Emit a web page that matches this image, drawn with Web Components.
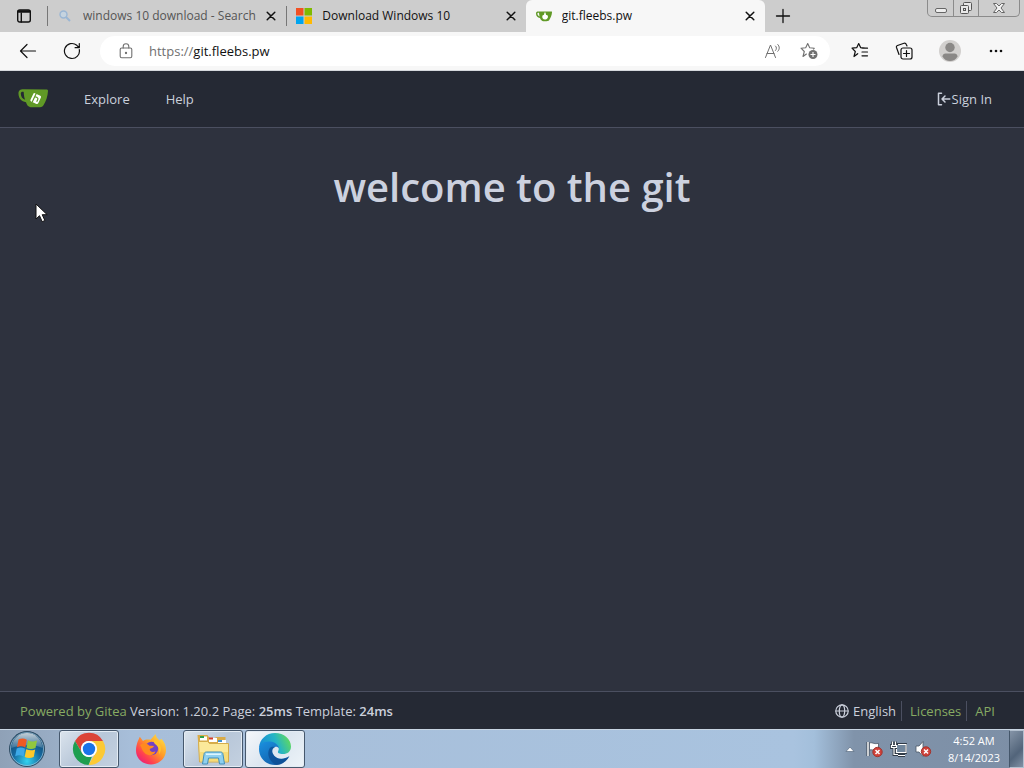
<!DOCTYPE html>
<html lang="en">
<head>
<meta charset="utf-8">
<meta name="viewport" content="width=device-width, initial-scale=1">
<title>git.fleebs.pw</title>
<style>
  html, body { margin: 0; height: 100%; }
  body { font-family: "Open Sans", "Noto Sans", sans-serif; }
</style>
</head>
<body>
<desktop-screen>
  <tab-strip slot="browser">
    <browser-tab icon="search" muted>windows 10 download - Search</browser-tab>
    <browser-tab icon="windows">Download Windows 10</browser-tab>
    <browser-tab icon="mug" active>git.fleebs.pw</browser-tab>
  </tab-strip>
  <browser-toolbar slot="browser"></browser-toolbar>
  <site-nav slot="browser"></site-nav>
  <site-home>welcome to the git</site-home>
  <site-footer slot="bottom"></site-footer>
  <task-bar slot="bottom"></task-bar>
</desktop-screen>

<script>
const line = (size, body, width = 1.2) =>
  `<svg width="${size}" height="${size}" viewBox="0 0 ${size} ${size}" fill="none" stroke="currentColor" stroke-width="${width}" stroke-linecap="round" stroke-linejoin="round" aria-hidden="true">${body}</svg>`;

const star = 'M6.700 11.700 3 14.500 4.300 9.500 1 6.200 5.700 5.700 7.700 1.500 9.700 5.700 14.300 6.200';

const icons = {
  tabs: line(16, '<rect x="1.700" y="2" width="12.600" height="12" rx="2"/><path d="M2.500 3.500h11" stroke-width="2.400"/><path d="M5.300 5v9"/>', 1.4),
  search: `<svg width="16" height="16" viewBox="0 0 16 16" fill="none" stroke="#9ab6d4" aria-hidden="true"><circle cx="6.500" cy="6.500" r="3.500" fill="#c5d3df" stroke-width="1.400"/><path d="m9 9 4 4" stroke-width="1.900"/></svg>`,
  windows: `<svg width="16" height="16" viewBox="0 0 16 16" aria-hidden="true"><path fill="#f25022" d="M0 0h7.500v7.500H0z"/><path fill="#7fba00" d="M8.500 0H16v7.500H8.500z"/><path fill="#00a4ef" d="M0 8.500h7.500V16H0z"/><path fill="#ffb900" d="M8.500 8.500H16V16H8.500z"/></svg>`,
  mug: `<svg width="16" height="16" viewBox="0 0 16 16" aria-hidden="true"><path fill="#609926" d="M0 5.500c0-2 1.500-2.300 3-2h12.500c.5 0 .6.500.5 1-.3 3-1.500 5.500-3 8-.5.800-6 1-7 .2C4.800 12 4.400 11 4 10 1.500 9.500 0 8 0 5.500Zm1.400-.2c0 1.700 1 2.800 2.200 3.200-.3-1.200-.5-2.400-.6-3.700-.8-.2-1.500-.2-1.600.5Z"/><path fill="#fff" d="m6.500 7.500 1.500-.8.500-2.200h1l.5 2.200 1.700.8c.8 2-.5 4-2.700 4s-3.300-2-2.500-4Z"/></svg>`,
  gitea: `<svg width="32" height="22" viewBox="0 0 32 22" aria-hidden="true"><path fill="#609926" d="M1.500 6C1.200 2 4 .8 8 1.300L29.500 1.500c1 0 1.500.5 1.500 1.500-.2 5-2 10.500-4.700 14.500-.8 1.200-1.800 1.700-3.300 1.700h-9.500c-2.500-.3-4-3-4.500-5C4.500 13.500 1.700 10.500 1.500 6Zm2.300-.4c0 3 1.500 5.400 4.300 6.200C7.200 9.500 6.800 6.500 6.700 3.900c-1.900-.2-2.900.2-2.900 1.700Z"/><g transform="rotate(25 18.500 10.500)"><rect x="14.500" y="6" width="8.500" height="9" rx="1.300" fill="#fff"/><path d="M17 5v10M17 9h2.500q1.500 0 1.500 1.500V13" fill="none" stroke="#609926" stroke-width="1.200"/></g></svg>`,
  close: line(10, '<path d="m1.200 1.200 7.600 7.600M8.800 1.200 1.200 8.800"/>', 1.5),
  plus: line(16, '<path d="M8 1.500v13M1.500 8h13"/>', 1.3),
  back: line(18, '<path d="M16.500 9h-15M8 2.500 1.500 9 8 15.500"/>', 1.2),
  reload: line(18, '<path d="M16.300 7.600A7.500 7.500 0 1 1 13.800 3.300L16 5.500M16.300 1.500v4.200h-4.200"/>', 1.2),
  lock: line(16, '<rect x="2.200" y="5" width="11.600" height="9.700" rx="1.500"/><path d="M5.200 5V3.500a2.800 2.800 0 0 1 5.600 0V5"/><circle cx="8" cy="10" r=".6" fill="currentColor"/>', 1.1),
  readAloud: line(18, '<path d="m1.500 15.500 5-12.500 5 12.500M3 11.500h7M11.500 4c1.300 1 1.300 3.300 0 4.500M13.800 2.500c2 2 2 4.800 0 6.800"/>', 1),
  starAdd: `<svg width="18" height="18" viewBox="0 0 18 18" fill="none" stroke="currentColor" stroke-width="1.100" stroke-linejoin="round" aria-hidden="true"><path d="${star} 13.300 7.500"/><circle cx="13" cy="12.500" r="4.500" fill="currentColor" stroke="none"/><path d="M13 10v5M10.500 12.500h5" stroke="#fff"/></svg>`,
  favorites: line(18, `<path d="${star}M11 6.200h5.500M11 10h5.500M11 13.800h5.500"/>`, 1.2),
  collections: line(18, '<rect x="6" y="6" width="11" height="11" rx="2"/><path d="M11.500 8.500v6M8.500 11.500h6M4 12.500 1.500 5.500c-.3-1 .2-1.700 1-2l6.500-2.300c1-.3 1.800 0 2.200 1L12 4"/>', 1.2),
  profile: `<svg width="22" height="22" viewBox="0 0 22 22" aria-hidden="true"><circle cx="11" cy="11" r="11" fill="#d2d0ce"/><circle cx="11" cy="7.500" r="4.700" fill="#8a8886"/><path fill="#8a8886" d="M3.500 16.500c0-2 1.500-3 3-3h9c1.500 0 3 1 3 3-1.500 3-4.500 4.500-7.500 4.500s-6-1.500-7.500-4.500Z"/></svg>`,
  more: '<svg width="16" height="16" viewBox="0 0 16 16" aria-hidden="true"><g fill="currentColor"><circle cx="3" cy="8" r="1.300"/><circle cx="8" cy="8" r="1.300"/><circle cx="13" cy="8" r="1.300"/></g></svg>',
  signIn: line(14, '<path d="M4.500 1.200H1.500v11.600h3M12.800 7H5M8 4 5 7l3 3"/>', 1.5),
  globe: line(14, '<circle cx="7" cy="7" r="6.200"/><ellipse cx="7" cy="7" rx="2.700" ry="6.200"/><path d="M1 7h12"/>', 1.2),
  minimize: '<svg width="14" height="14" viewBox="0 0 14 14" aria-hidden="true"><rect x="1.500" y="7.500" width="11" height="4" rx="1.500" fill="#eee" stroke="#666"/></svg>',
  restore: '<svg width="14" height="14" viewBox="0 0 14 14" fill="#e8e8e8" stroke="#555" aria-hidden="true"><rect x="4.500" y="1.500" width="8" height="8" rx="1"/><rect x="1.500" y="4.500" width="8" height="8" rx="1"/><rect x="4.500" y="7.500" width="2" height="2"/></svg>',
  winClose: '<svg width="14" height="14" viewBox="0 0 14 14" aria-hidden="true"><path d="M1.500 2.500h3L7 5l2.500-2.500h3L9 7l3.500 4.500h-3L7 9l-2.500 2.500h-3L5 7Z" fill="#f2f2f2" stroke="#666"/></svg>',
  start: `<svg width="38" height="38" viewBox="0 0 38 38" aria-hidden="true"><defs><radialGradient id="orb" cx=".5" cy=".85" r=".9"><stop offset="0" stop-color="#34d3ef"/><stop offset=".45" stop-color="#1569a0"/><stop offset="1" stop-color="#123958"/></radialGradient><linearGradient id="shine" x2="0" y2="1"><stop offset="0" stop-color="#fff" stop-opacity=".75"/><stop offset="1" stop-color="#fff" stop-opacity=".15"/></linearGradient></defs><circle cx="19" cy="19" r="17.500" fill="url(#orb)" stroke="#314d63"/><circle cx="19" cy="19" r="16.500" fill="none" stroke="#9fc4dc" stroke-opacity=".7"/><path d="M3.500 18C4 9 11 3 19 3s15 6 15.500 15c-9-4-22-3-31 0Z" fill="url(#shine)"/><path fill="#ef5a23" d="M10.500 9.500c3-1.300 5.500-1.300 8.300.3L17.300 17.500c-2.900-1.600-5.500-1.500-8.300-.3Z"/><path fill="#92c83e" d="M20 10.300c3 1.500 5.600 1.600 9 .2L27.500 18c-3.300 1.400-6.100 1.200-9 0Z"/><path fill="#3da9e8" d="M8.700 18.500c3-1.300 5.500-1.200 8.300.3L15.500 26.500c-2.900-1.600-5.500-1.500-8.300-.3Z"/><path fill="#fdc92b" d="M18.200 19.200c3 1.400 5.700 1.500 9 .2l-1.500 7.500c-3.300 1.400-6.100 1.200-9 0Z"/></svg>`,
  chrome: `<svg width="34" height="34" viewBox="0 0 34 34" aria-hidden="true"><path fill="#db4437" d="M3 9a16 16 0 0 1 28 0H17a8 8 0 0 0-7 12Z"/><path fill="#fcc934" d="M31 9A16 16 0 0 1 16.500 33l7.400-12.500A8 8 0 0 0 17 9Z"/><path fill="#1e9e4f" d="M3 9A16 16 0 0 0 16.500 33L20 24.400A8 8 0 0 1 10 21Z"/><circle cx="17" cy="17" r="8" fill="#fff"/><circle cx="17" cy="17" r="6.200" fill="#1a73e8"/></svg>`,
  firefox: `<svg width="34" height="34" viewBox="0 0 34 34" aria-hidden="true"><defs><linearGradient id="fox" x1="1" y1="0" x2=".1" y2="1"><stop offset="0" stop-color="#fff04d"/><stop offset=".45" stop-color="#ff9a26"/><stop offset=".75" stop-color="#ff4050"/><stop offset="1" stop-color="#e31587"/></linearGradient></defs><path fill="url(#fox)" d="M3.500 10 5.800 4.800 9 9c2.500-1.800 5-1.800 7.500-1.200C18 6 19.500 4.500 21.500 2c.5 3 2 4.500 4 6.500l1.800-1.700C30.500 10 32 14 32 18c0 8-6.700 14.500-15 14.500S2 26.500 2 18.500c0-3.500.7-6 1.500-8.500Z"/><circle cx="17.500" cy="16.500" r="6.700" fill="#7242c5"/><path fill="#ff8a1f" d="M6 13c3.500-3 7-2 9.500.8 1.500.2 3 0 4.500.3-.8 2-3 2.300-4.300 3 .2 2.600 2.800 4 5.800 2.200-1 3.700-5.500 4.700-8.500 3.200C8.500 20.500 8 16 6 13Z"/><path fill="#ffc52b" d="M20.500 8c6 1.500 8.500 9.500 4.500 14.500 1-4-.2-8-4-10.500-1-1-1.300-2.500-.5-4Z"/></svg>`,
  explorer: `<svg width="34" height="34" viewBox="0 0 34 34" aria-hidden="true"><path fill="#d9ab48" d="M1.500 3h10l2 3h5l2-1h9v22H3.500Z"/><path fill="#fff" d="M4 4.500h7v4H4zM13 6h8v4h-8z"/><path fill="#32a34a" d="M4 4h4v2H4z"/><path fill="#d83c27" d="M13 5.500h4v2h-4z"/><path fill="#fff" d="M22 8h8v3h-8z"/><path fill="#4292d0" d="M22 8h4v2h-4z"/><path fill="#fbe99a" stroke="#d5ad4b" d="M2.500 9.500h9l2 2h19v18.500h-29Z"/><path fill="#f4d565" d="M4 20h28v9H4z" opacity=".65"/><path fill="#8fd0ef" stroke="#408fba" d="M8 22.500c0-1.500 1-2.500 2.500-2.500h14c1.500 0 2.500 1 2.500 2.500L28.500 32h-5l-1-6h-10l-1 6h-5Z"/><path d="M10 22.200h15" stroke="#e1f7ff" stroke-width="1.500"/></svg>`,
  edge: `<svg width="34" height="34" viewBox="0 0 34 34" aria-hidden="true"><defs><linearGradient id="sea" x1="0" y1=".6" x2="1" y2=".3"><stop offset="0" stop-color="#1688d9"/><stop offset=".55" stop-color="#25b4c5"/><stop offset="1" stop-color="#65dc58"/></linearGradient><linearGradient id="deep" x1="0" y1="0" x2=".8" y2="1"><stop offset="0" stop-color="#1a91e0"/><stop offset="1" stop-color="#1159a5"/></linearGradient></defs><path fill="url(#sea)" d="M1 16C1.500 7 8.500 1 17 1c9 0 16 6 16 13.500 0 5-3.500 7.500-8 7.500-4 0-5.500-1-5-2.500 2.500-4-1-8-6-8-6 0-11 1.500-13 4.500Z"/><path fill="url(#deep)" d="M1 17C1 12 6 9 12 9.500c5 .5 9 3.500 9 7-1-1.500-2.500-2-4-1.500-3 1.200-3.500 4.500-2 7 2.500 4.500 9 7 16.500 2C28 30 23 33 17 33 8 33 1 26 1 17Z"/><path fill="#0c4c91" opacity=".75" d="M11.500 16.500c-3 5-.5 13.500 7 16.400C23 33 28 30 31 25c-7.500 4-14 1.500-16-3-1.500-2.500-1-5.800 2-7-2.500-.7-4.500-.2-5.500 1.500Z"/></svg>`,
  up: '<svg width="10" height="6" viewBox="0 0 10 6" aria-hidden="true"><path fill="#fff" stroke="#4a5e74" stroke-width=".6" d="M1 5.500 5 1l4 4.500Z"/></svg>',
  flag: '<svg width="18" height="18" viewBox="0 0 18 18" aria-hidden="true"><path d="M2 16V2" stroke="#3a4552" stroke-width="3"/><path d="M2 16V2" stroke="#fff" stroke-width="1.500"/><path fill="#fff" stroke="#4a5665" stroke-width=".8" d="M3.500 3c3-1 4 1.500 9 .3v7c-4 1-6-1.300-9-.3Z"/><circle cx="11.500" cy="12" r="4.700" fill="#d0413a" stroke="#a1352f"/><path d="m9.500 10 4 4m0-4-4 4" stroke="#fff" stroke-width="1.500"/></svg>',
  network: '<svg width="18" height="18" viewBox="0 0 18 18" fill="none" aria-hidden="true"><path d="M6.500 4.500h9v8h-9zM8 15.500h7M2.500 1.500v4m3-4v4M1.500 5.500h5v2h-5zM4 8v6.500h4" stroke="#303a46" stroke-width="2.800"/><path fill="#71869c" d="M7 5h8v7H7z"/><path d="M8 4.500h8v8H6.500V9M8 15.500h7M2.500 1.500v4m3-4v4M1.500 5.500h5v2h-5zM4 8v6.500h4" stroke="#fff" stroke-width="1.200"/></svg>',
  sound: '<svg width="18" height="18" viewBox="0 0 18 18" aria-hidden="true"><path fill="#fff" stroke="#4a5665" stroke-width=".8" d="M2 6h3l4-4.500v15L5 12H2Z"/><circle cx="12" cy="11.500" r="4.700" fill="#d0413a" stroke="#a1352f"/><path d="m10 9.500 4 4m0-4-4 4" stroke="#fff" stroke-width="1.500"/></svg>',
  cursor: '<svg width="14" height="20" viewBox="0 0 14 20" aria-hidden="true"><path fill="#fff" stroke="#111" d="M1 1v15l3.500-3.300 2.700 6 2.700-1.200-2.700-5.800h5Z"/></svg>'
};

const base = `<style>
  * { box-sizing: border-box; }
  svg { display: block; flex: none; }
  button { font: inherit; color: inherit; background: none; border: 0; padding: 0; margin: 0; display: flex; align-items: center; justify-content: center; }
  a { color: inherit; text-decoration: none; }
</style>`;

function define(name, render) {
  customElements.define(name, class extends HTMLElement {
    constructor() {
      super();
      this.attachShadow({ mode: 'open' });
    }
    connectedCallback() {
      this.shadowRoot.innerHTML = base + render(this);
    }
  });
}

define('desktop-screen', () => `
  <style>
    :host { display: flex; flex-direction: column; min-height: 100vh; background: #2e323e; }
    main { flex: 1; display: flex; flex-direction: column; }
  </style>
  <slot name="browser"></slot>
  <main><slot></slot></main>
  <slot name="bottom"></slot>`);

define('tab-strip', () => `
  <style>
    :host { display: flex; height: 32px; background: #cdcdcd; color: #111; }
    .actions { width: 47px; }
    .tabs { display: flex; flex: 0 1 718px; min-width: 0; }
    .add { width: 36px; }
    .window { margin-left: auto; margin-right: 4px; height: 17px; display: flex; flex: none; border: 1px solid #8b8b8b; border-top: 0; border-radius: 0 0 5px 5px; }
    .window button { width: 25px; height: 16px; }
    .window button + button { border-left: 1px solid #8b8b8b; }
    .window button:last-child { width: 41px; }
  </style>
  <button class="actions" aria-label="Tab actions">${icons.tabs}</button>
  <div class="tabs"><slot></slot></div>
  <button class="add" aria-label="New tab">${icons.plus}</button>
  <div class="window">
    <button aria-label="Minimize">${icons.minimize}</button>
    <button aria-label="Restore">${icons.restore}</button>
    <button aria-label="Close">${icons.winClose}</button>
  </div>`);

define('browser-tab', el => `
  <style>
    :host { flex: 1; min-width: 0; display: flex; align-items: center; gap: 10px; padding: 0 10px; font-size: 12px; line-height: 16px; background: linear-gradient(#777, #777) left center / 1px 20px no-repeat; }
    :host([muted]) { color: #555; }
    :host([active]) { background: #f7f7f7; border-radius: 6px 6px 0 0; }
    .title { flex: 1; min-width: 0; overflow: hidden; white-space: nowrap; }
    button { color: #111; }
  </style>
  ${icons[el.getAttribute('icon')]}
  <span class="title"><slot></slot></span>
  <button aria-label="Close tab">${icons.close}</button>`);

define('browser-toolbar', () => `
  <style>
    :host { display: flex; align-items: center; height: 39px; padding: 0 6px; background: #f7f7f7; border-bottom: 1px solid #d5d8dc; color: #111; box-sizing: border-box; }
    button { width: 44px; height: 32px; flex: none; }
    form { flex: 1; min-width: 0; display: flex; align-items: center; height: 30px; margin: 0 8px 0 6px; padding: 0 3px 0 18px; border-radius: 15px; background: #fff; font-size: 13px; line-height: 20px; color: #707070; }
    form button { width: 36px; }
    label { margin-left: 15px; }
    input { flex: 1; min-width: 0; font: inherit; color: #111; border: 0; padding: 0; background: none; outline: 0; }
    .profile { width: 48px; }
  </style>
  <button aria-label="Back">${icons.back}</button>
  <button aria-label="Refresh">${icons.reload}</button>
  <form>
    ${icons.lock}
    <label for="address">https://</label>
    <input id="address" type="text" value="git.fleebs.pw" spellcheck="false">
    <button type="button" aria-label="Read aloud">${icons.readAloud}</button>
    <button type="button" aria-label="Add to favorites">${icons.starAdd}</button>
  </form>
  <button aria-label="Favorites">${icons.favorites}</button>
  <button aria-label="Collections">${icons.collections}</button>
  <button class="profile" aria-label="Profile">${icons.profile}</button>
  <button aria-label="Settings and more">${icons.more}</button>`);

define('site-nav', () => `
  <style>
    :host { display: block; background: #252934; border-bottom: 1px solid #4b4f60; color: #cbd0dc; font-size: 13px; line-height: 20px; }
    nav { display: flex; align-items: center; height: 56px; padding: 0 32px 0 17px; }
    .logo { margin-right: 35px; }
    .link + .link { margin-left: 36px; }
    .sign { display: flex; align-items: center; margin-left: auto; gap: 1px; }
  </style>
  <nav>
    <a class="logo" href="#" aria-label="Home">${icons.gitea}</a>
    <a class="link" href="#explore">Explore</a>
    <a class="link" href="#help">Help</a>
    <a class="sign" href="#login">${icons.signIn}Sign In</a>
  </nav>`);

define('site-home', () => `
  <style>
    :host { display: block; position: relative; padding: 32px 16px; color: #ccd1df; text-align: center; }
    h1 { margin: 0; font-size: 40px; line-height: 54px; font-weight: 600; }
    .pointer { position: absolute; left: 35px; top: 75px; }
  </style>
  <h1><slot></slot></h1>
  <span class="pointer">${icons.cursor}</span>`);

define('site-footer', () => `
  <style>
    :host { display: block; background: #252934; border-top: 1px solid #4b4f60; color: #cbd0dc; font-size: 13px; line-height: 20px; }
    footer { display: flex; align-items: center; justify-content: space-between; height: 37px; padding: 0 29px 0 20px; }
    a { color: #87ab63; }
    strong { font-weight: 600; }
    .links { display: flex; align-items: center; }
    .links a { border-left: 1px solid #4b4f60; margin-left: 5px; padding-left: 8px; }
    button { gap: 4px; }
  </style>
  <footer>
    <div><a href="#gitea">Powered by Gitea</a> Version: 1.20.2 Page: <strong>25ms</strong> Template: <strong>24ms</strong></div>
    <div class="links">
      <button>${icons.globe}English</button>
      <a href="#licenses">Licenses</a>
      <a href="#api">API</a>
    </div>
  </footer>`);

define('task-bar', () => `
  <style>
    :host { display: flex; height: 39px; box-sizing: border-box; border-top: 1px solid #c8d4e2; background: linear-gradient(90deg, #8fa1b7, #a7bed9 130px, #a9c3df calc(100% - 230px), #a3bfdb calc(100% - 210px), #8093aa calc(100% - 170px), #7d8fa6); }
    .start { width: 54px; }
    .apps { display: flex; gap: 2px; padding-left: 5px; }
    .apps button { width: 60px; height: 38px; border: 1px solid transparent; border-radius: 3px; }
    .apps .open { border-color: #46586d; background: linear-gradient(135deg, #dbe4ed, #b8c7d9 50%, #c4d1e0); box-shadow: inset 0 0 0 1px #e4ecf4; }
    .apps .current { background: linear-gradient(135deg, #f5f8fb, #dce6f0 50%, #edf3f8); }
    .tray { display: flex; align-items: center; gap: 6px; margin-left: auto; color: #fff; }
    .tray button:first-child { width: 20px; }
    .clock { margin: 0 3px 0 10px; font-size: 11px; line-height: 17px; text-align: center; }
    .desktop { width: 15px; height: 38px; border: 1px solid #b3c0cf; border-left-color: #44566a; background: linear-gradient(135deg, #8594a7, #52647a 60%, #8191a5); }
  </style>
  <button class="start" aria-label="Start">${icons.start}</button>
  <div class="apps">
    <button class="open" aria-label="Google Chrome">${icons.chrome}</button>
    <button aria-label="Firefox">${icons.firefox}</button>
    <button class="open" aria-label="Windows Explorer">${icons.explorer}</button>
    <button class="open current" aria-label="Microsoft Edge">${icons.edge}</button>
  </div>
  <div class="tray">
    <button aria-label="Show hidden icons">${icons.up}</button>
    <button aria-label="Action Center">${icons.flag}</button>
    <button aria-label="Network">${icons.network}</button>
    <button aria-label="Volume muted">${icons.sound}</button>
    <div class="clock"><div>4:52 AM</div><div>8/14/2023</div></div>
    <button class="desktop" aria-label="Show desktop"></button>
  </div>`);
</script>
</body>
</html>
